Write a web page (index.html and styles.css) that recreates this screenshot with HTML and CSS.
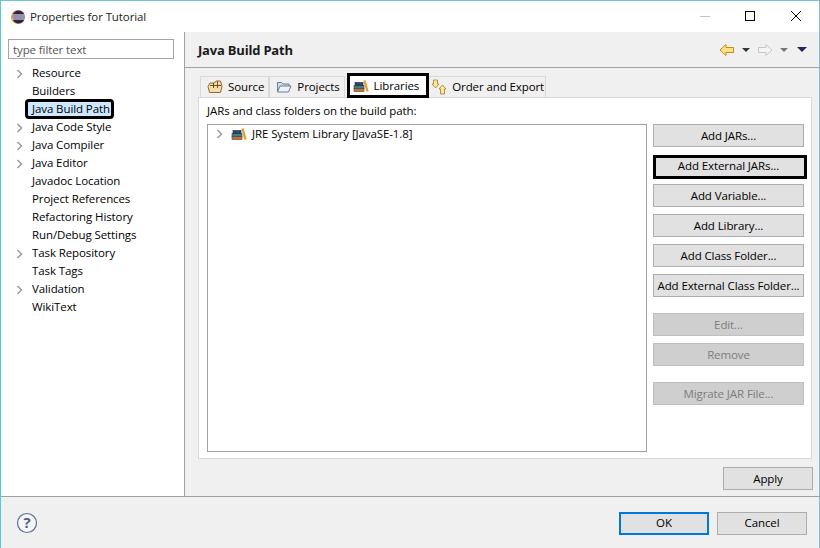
FILE: index.html
```html
<!DOCTYPE html>
<html lang="en">
<head>
<meta charset="utf-8">
<title>Properties for Tutorial</title>
<link rel="stylesheet" href="styles.css">
</head>
<body>
<div class="window">
  <header class="titlebar">
    <svg class="app-icon" width="16" height="16" viewBox="0 0 16 16"><circle cx="8" cy="8" r="7" fill="#f7941e"/><circle cx="8.6" cy="8" r="6.4" fill="#2c2255"/><path d="M2 6h13M2 8h13.4M2 10h13" stroke="#fff" stroke-width="1"/></svg>
    <span class="title">Properties for Tutorial</span>
    <div class="controls">
      <svg width="46" height="32" viewBox="0 0 46 32"><path d="M19 15.500h10" stroke="#c4c4c4"/></svg>
      <svg width="46" height="32" viewBox="0 0 46 32"><rect x="18.500" y="10.500" width="9" height="9" fill="none" stroke="#000"/></svg>
      <svg width="46" height="32" viewBox="0 0 46 32"><path d="M18 10l10 10M28 10L18 20" stroke="#000"/></svg>
    </div>
  </header>
  <div class="main">
    <aside class="sidebar">
      <input class="filter" type="text" placeholder="type filter text">
      <ul class="tree">
        <li class="node"><svg class="chev" width="8" height="10" viewBox="0 0 8 10"><path d="M1.500 1l4 4-4 4" fill="none" stroke="#9a9a9a" stroke-width="1.500"/></svg><span>Resource</span></li>
        <li class="node"><span>Builders</span></li>
        <li class="node"><span class="selected">Java Build Path</span></li>
        <li class="node"><svg class="chev" width="8" height="10" viewBox="0 0 8 10"><path d="M1.500 1l4 4-4 4" fill="none" stroke="#9a9a9a" stroke-width="1.500"/></svg><span>Java Code Style</span></li>
        <li class="node"><svg class="chev" width="8" height="10" viewBox="0 0 8 10"><path d="M1.500 1l4 4-4 4" fill="none" stroke="#9a9a9a" stroke-width="1.500"/></svg><span>Java Compiler</span></li>
        <li class="node"><svg class="chev" width="8" height="10" viewBox="0 0 8 10"><path d="M1.500 1l4 4-4 4" fill="none" stroke="#9a9a9a" stroke-width="1.500"/></svg><span>Java Editor</span></li>
        <li class="node"><span>Javadoc Location</span></li>
        <li class="node"><span>Project References</span></li>
        <li class="node"><span>Refactoring History</span></li>
        <li class="node"><span>Run/Debug Settings</span></li>
        <li class="node"><svg class="chev" width="8" height="10" viewBox="0 0 8 10"><path d="M1.500 1l4 4-4 4" fill="none" stroke="#9a9a9a" stroke-width="1.500"/></svg><span>Task Repository</span></li>
        <li class="node"><span>Task Tags</span></li>
        <li class="node"><svg class="chev" width="8" height="10" viewBox="0 0 8 10"><path d="M1.500 1l4 4-4 4" fill="none" stroke="#9a9a9a" stroke-width="1.500"/></svg><span>Validation</span></li>
        <li class="node"><span>WikiText</span></li>
      </ul>
    </aside>
    <section class="page">
      <div class="page-head">
        <h1>Java Build Path</h1>
        <div class="nav">
          <svg width="16" height="14" viewBox="0 0 16 14"><path d="M1 7l6-5.500V4.500h7.500v5H7v3z" fill="#fce08a" stroke="#c98a16" stroke-width="1"/></svg>
          <span class="tri"></span>
          <svg class="gap" width="16" height="14" viewBox="0 0 16 14"><path d="M15 7L9 1.500V4.500H1.500v5H9v3z" fill="#f4f4f4" stroke="#c6c6c6" stroke-width="1"/></svg>
          <span class="tri dim"></span>
          <span class="tri menu"></span>
        </div>
      </div>
      <div class="page-body">
        <div class="tabs">
          <div class="tab">
            <svg width="16" height="14" viewBox="0 0 16 14"><path d="M1 6.500L3 3h4.500L9 1h4.500L15 6.500l-1.500 6h-11z" fill="#f6dca8" stroke="#8e6a32"/><path d="M6.500 3v5M10.500 1.500v6.500M3 5.500h11" stroke="#5d4018" stroke-width=".9"/></svg>
            <span>Source</span>
          </div>
          <div class="tab">
            <svg width="16" height="14" viewBox="0 0 16 14"><path d="M1.500 12V2.500h4l1.500 1.500h6v2" fill="#cfdcec" stroke="#6c7a94"/><path d="M1.500 12l2.500-6h11l-2.500 6z" fill="#eef3fa" stroke="#6c7a94"/></svg>
            <span>Projects</span>
          </div>
          <div class="tab active">
            <svg width="16" height="14" viewBox="0 0 16 14"><rect x="1" y="9.500" width="10" height="3" fill="#c2703a" stroke="#6d3d1c" stroke-width=".6"/><rect x="1" y="6.500" width="10" height="3" fill="#3f7f7c" stroke="#244a48" stroke-width=".6"/><rect x="2" y="3.500" width="8" height="3" fill="#34406d" stroke="#1d2443" stroke-width=".6"/><path d="M11.500 1.500l3 11" stroke="#e0a030" stroke-width="2.400"/></svg>
            <span>Libraries</span>
          </div>
          <div class="tab last">
            <svg width="16" height="16" viewBox="0 0 16 16"><path d="M2.500 1h4v4H8L4.500 9 1 5h1.500z" fill="#fbe6a6" stroke="#b5862a" stroke-width=".9"/><path d="M9.500 15v-5H8l3.500-4 3.500 4h-1.500v5z" fill="#fbe6a6" stroke="#b5862a" stroke-width=".9"/></svg>
            <span>Order and Export</span>
          </div>
        </div>
        <div class="panel">
          <p class="panel-label">JARs and class folders on the build path:</p>
          <div class="panel-row">
            <div class="listbox">
              <div class="list-item">
                <svg class="chev" width="8" height="10" viewBox="0 0 8 10"><path d="M1.500 1l4 4-4 4" fill="none" stroke="#9a9a9a" stroke-width="1.500"/></svg>
                <svg width="16" height="14" viewBox="0 0 16 14"><rect x="1" y="9.500" width="10" height="3" fill="#c2703a" stroke="#6d3d1c" stroke-width=".6"/><rect x="1" y="6.500" width="10" height="3" fill="#3f7f7c" stroke="#244a48" stroke-width=".6"/><rect x="2" y="3.500" width="8" height="3" fill="#34406d" stroke="#1d2443" stroke-width=".6"/><path d="M11.500 1.500l3 11" stroke="#e0a030" stroke-width="2.400"/></svg>
                <span>JRE System Library [JavaSE-1.8]</span>
              </div>
            </div>
            <div class="actions">
              <button class="btn">Add JARs...</button>
              <button class="btn marked">Add External JARs...</button>
              <button class="btn">Add Variable...</button>
              <button class="btn">Add Library...</button>
              <button class="btn">Add Class Folder...</button>
              <button class="btn">Add External Class Folder...</button>
              <button class="btn off sep">Edit...</button>
              <button class="btn off">Remove</button>
              <button class="btn off sep">Migrate JAR File...</button>
            </div>
          </div>
        </div>
        <div class="apply-row"><button class="btn wide">Apply</button></div>
      </div>
    </section>
  </div>
  <footer class="footer">
    <svg width="22" height="22" viewBox="0 0 22 22"><circle cx="11" cy="11" r="9.500" fill="#f6f6f8" stroke="#5d7097" stroke-width="1.200"/><text class="help-mark" x="11" y="16" text-anchor="middle">?</text></svg>
    <div class="footer-btns">
      <button class="btn wide default">OK</button>
      <button class="btn wide">Cancel</button>
    </div>
  </footer>
</div>
</body>
</html>
```
FILE: styles.css
```css
* { box-sizing: border-box; }
html, body { margin: 0; padding: 0; }
body { width: 820px; height: 548px; overflow: hidden; background: #fff; font: 11.5px/16px "Open Sans", "Noto Sans", sans-serif; letter-spacing: -0.1px; color: #000; }
.window { width: 820px; height: 548px; display: flex; flex-direction: column; border-top: 1px solid #6fc5d2; border-left: 1px solid #5ac6d8; border-right: 1px solid #6fc5d2; }
.titlebar { height: 31px; flex: none; display: flex; align-items: center; padding-left: 9px; background: #fff; }
.app-icon { margin-right: 4px; }
.title { color: #222; }
.controls { margin-left: auto; display: flex; margin-right: 0; }
.controls svg { display: block; }
.main { flex: 1; display: flex; min-height: 0; }
.sidebar { width: 184px; flex: none; background: #fff; border-right: 1px solid #a0a0a0; padding: 7px 0 0 7px; }
.filter { display: block; width: 166px; height: 20px; border: 1px solid #a5a5a5; padding: 0 4px; font: inherit; letter-spacing: inherit; outline: none; }
.filter::placeholder { color: #555; opacity: 1; }
.tree { list-style: none; margin: 5px 0 0; padding: 0; }
.node { height: 18px; display: flex; align-items: center; padding-left: 24px; position: relative; white-space: nowrap; }
.node .chev { position: absolute; left: 8px; top: 5px; }
.selected { background: #cde8ff; outline: 3px solid #000; border-radius: 1px; padding: 0 1px 0 4px; margin-left: -4px; height: 14px; line-height: 14px; }
.page { flex: 1; background: #f0f0f0; display: flex; flex-direction: column; min-width: 0; }
.page-head { height: 36px; flex: none; display: flex; align-items: center; padding: 0 12px 0 13px; border-bottom: 1px solid #a0a0a0; }
h1 { margin: 0; font-size: 13px; font-weight: 700; letter-spacing: -0.2px; color: #1a1a1a; }
.nav { margin-left: auto; display: flex; align-items: center; }
.gap { margin-left: 7px; }
.tri { width: 0; height: 0; border-left: 4px solid transparent; border-right: 4px solid transparent; border-top: 4px solid #333; margin-left: 7px; }
.tri.dim { border-top-color: #777; }
.tri.menu { border-left-width: 5px; border-right-width: 5px; border-top: 5px solid #2c1f66; margin-left: 9px; }
.page-body { flex: 1; padding: 8px 6px 6px 13px; display: flex; flex-direction: column; min-height: 0; }
.tabs { height: 21px; flex: none; display: flex; align-items: flex-end; padding-left: 2px; position: relative; }
.tab { height: 21px; display: flex; align-items: center; gap: 5px; padding: 0 4px 0 6px; background: #f0f0f0; border: 1px solid #d9d9d9; border-bottom: 0; white-space: nowrap; }
.tab.active { height: 25px; background: #fff; border: 3px solid #000; position: relative; z-index: 1; padding: 0 7px 0 3px; margin: 0 0 -1px 2px; }
.tab.last { padding: 0 1px 0 2px; border-left: 0; }
.panel { flex: 1; background: #fff; border: 1px solid #d9d9d9; margin-right: 1px; padding: 5px 6px 6px 8px; display: flex; flex-direction: column; min-height: 0; }
.panel-label { margin: 0 0 5px; height: 16px; }
.panel-row { flex: 1; display: flex; gap: 6px; min-height: 0; }
.listbox { width: 440px; border: 1px solid #a0a0a0; padding: 0 0 0 8px; }
.list-item { display: flex; align-items: center; height: 18px; white-space: nowrap; }
.list-item .chev { margin-right: 7px; }
.list-item span { margin-left: 5px; }
.actions { width: 151px; display: flex; flex-direction: column; gap: 7px; }
.btn { display: block; flex: none; height: 23px; padding: 0; background: #e1e1e1; border: 1px solid #adadad; font: inherit; letter-spacing: inherit; color: #000; white-space: nowrap; text-align: center; }
.actions .btn { width: 151px; }
.actions .btn.marked { border: 3px solid #000; margin: 1px 0 -2px; padding: 0 3px 2px 0; width: 154px; height: 24px; }
.btn.off { background: #cfcfcf; color: #7d7d7d; border-color: #bfbfbf; }
.btn.sep { margin-top: 9px; }
.btn.wide { width: 90px; }
.apply-row { flex: none; height: 31px; display: flex; justify-content: flex-end; align-items: flex-end; }
.footer { height: 52px; flex: none; background: #f0f0f0; border-top: 1px solid #a0a0a0; display: flex; align-items: center; padding: 0 12px 0 15px; }
.footer-btns { margin-left: auto; margin-top: 1px; display: flex; gap: 8px; }
.default { border: 2px solid #0078d7; }
.help-mark { font: 700 15px "Open Sans", sans-serif; fill: #4d6088; }
```
